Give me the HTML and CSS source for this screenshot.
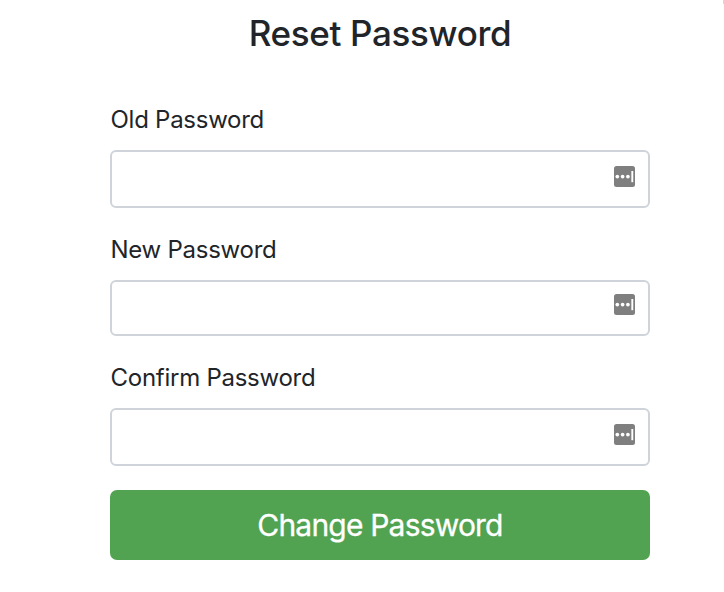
FILE: index.html
```
<!DOCTYPE html>
<html lang="en">
<head>
<meta charset="utf-8">
<title>Reset Password</title>
<link rel="stylesheet" href="styles.css">
</head>
<body>
<svg class="defs" aria-hidden="true"><symbol id="key" viewBox="0 0 21 21"><rect width="21" height="21" rx="2.5" fill="#7f7f7f"/><circle cx="3.3" cy="10.6" r="1.85" fill="#fff"/><circle cx="8.6" cy="10.6" r="1.85" fill="#fff"/><circle cx="13.9" cy="10.6" r="1.85" fill="#fff"/><path d="M18.3 5v11.2" stroke="#fff" stroke-width="1.9"/></symbol></svg>
<div class="edge"></div>
<form class="reset">
<h1 class="title"><span>Reset Password</span></h1>
<label class="label" for="old"><span>Old Password</span></label>
<div class="field"><input class="input" id="old" type="password"><svg class="icon"><use href="#key"/></svg></div>
<label class="label" for="new"><span>New Password</span></label>
<div class="field field-short"><input class="input" id="new" type="password"><svg class="icon"><use href="#key"/></svg></div>
<label class="label" for="confirm"><span>Confirm Password</span></label>
<div class="field"><input class="input" id="confirm" type="password"><svg class="icon"><use href="#key"/></svg></div>
<button class="submit" type="button"><span>Change Password</span></button>
</form>
</body>
</html>
```
FILE: styles.css
```
* { box-sizing: border-box; }
body { margin: 0; background: #fff; color: #212529; font-family: Inter, sans-serif; overflow: hidden; }
.defs { position: absolute; width: 0; height: 0; }
.edge { position: absolute; top: 0; right: 0; width: 1px; height: 4px; background: #d8d8d8; }
.reset { width: 540px; margin-left: 110px; }
.title { margin: 0 0 42px; height: 60px; padding-top: 11px; font-size: 35px; line-height: 44px; font-weight: 500; text-align: center; letter-spacing: -0.35px; }
.label { display: block; height: 48px; font-size: 24px; line-height: 36px; letter-spacing: -0.26px; padding-left: 0.5px; }
.field { display: flex; align-items: flex-start; height: 58px; margin-bottom: 24px; padding-right: 13px; border: 2px solid #ced4da; border-radius: 6px; }
.field-short { height: 56px; }
.input { flex: 1; min-width: 0; height: 100%; padding: 0 20px; border: 0; outline: 0; background: transparent; font: inherit; }
.icon { width: 21px; height: 21px; margin-top: 14px; }
.field-short .icon { margin-top: 12px; }
.submit { display: block; width: 540px; height: 70px; padding: 0; border: 0; border-radius: 7px; background: #51a351; color: #fff; font: 400 30px/40px Inter, sans-serif; letter-spacing: -0.8px; -webkit-text-stroke: 0.3px #fff; }
```
